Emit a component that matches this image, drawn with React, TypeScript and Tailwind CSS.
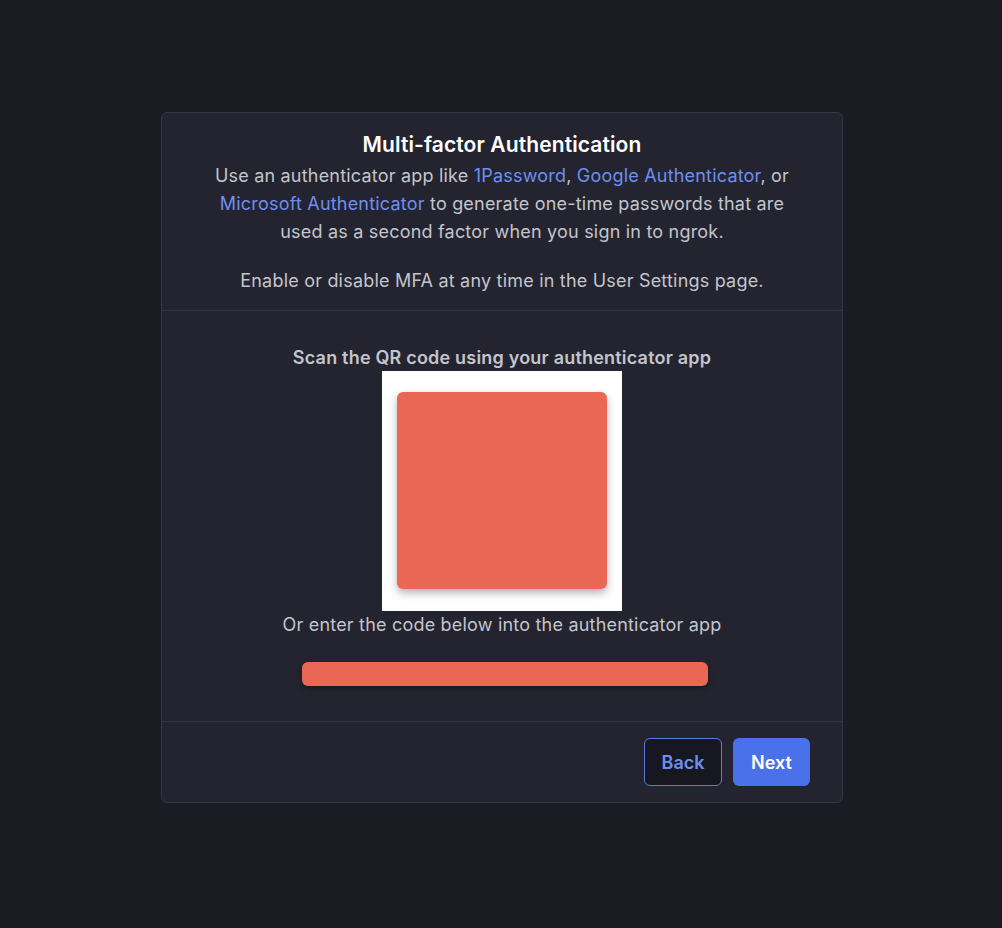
export default function App() {
  return (
    <div className="min-h-[928px] bg-[#1b1b24] pt-[112px] pl-[2px] font-['Inter',sans-serif]">
      <div className="mx-auto w-[682px] rounded-md border border-[#363743] bg-[#23242f]">
        {/* Intro */}
        <div className="border-b border-[#33343f] px-6 pt-[18px] pb-[15px] text-center">
          <h1 className="text-[21px] font-semibold leading-[28px] tracking-[0.1px] text-white">
            Multi-factor Authentication
          </h1>
          <p className="mt-[3px] text-[18px] leading-[28px] tracking-[0.2px] text-[#c4c5cc]">
            Use an authenticator app like{" "}
            <a className="text-[#6f8ff0]">1Password</a>,{" "}
            <a className="text-[#6f8ff0]">Google Authenticator</a>, or
            <br />
            <a className="text-[#6f8ff0]">Microsoft Authenticator</a> to generate one-time passwords that are
            <br />
            used as a second factor when you sign in to ngrok.
          </p>
          <p className="mt-[21px] text-[18px] leading-[28px] tracking-[0.2px] text-[#c4c5cc]">
            Enable or disable MFA at any time in the User Settings page.
          </p>
        </div>

        {/* QR */}
        <div className="flex flex-col items-center border-b border-[#33343f] pt-[34px] pb-[35px]">
          <p className="text-[18px] font-semibold leading-[26px] tracking-[0.2px] text-[#c4c5cc]">
            Scan the QR code using your authenticator app
          </p>
          <div className="flex h-[240px] w-[240px] items-start justify-center bg-white pt-[21px]">
            <div className="h-[197px] w-[210px] rounded-md bg-[#ea6756] shadow-[0_4px_8px_rgba(0,0,0,0.3)]" />
          </div>
          <p className="text-[18px] leading-[28px] tracking-[0.2px] text-[#c4c5cc]">
            Or enter the code below into the authenticator app
          </p>
          <div className="mt-[23px] ml-[6px] h-[24px] w-[406px] rounded-md bg-[#ea6756] shadow-[0_3px_6px_rgba(0,0,0,0.3)]" />
        </div>

        {/* Footer */}
        <div className="flex justify-end gap-[11px] px-[32px] pt-[16px] pb-[16px]">
          <button className="h-[48px] w-[78px] rounded-md border border-[#5b7be0] bg-[#161720] text-[18px] font-semibold text-[#6f8ff0]">
            Back
          </button>
          <button className="h-[48px] w-[77px] rounded-md bg-[#4a70ea] text-[18px] font-semibold text-white">
            Next
          </button>
        </div>
      </div>
    </div>
  );
}
